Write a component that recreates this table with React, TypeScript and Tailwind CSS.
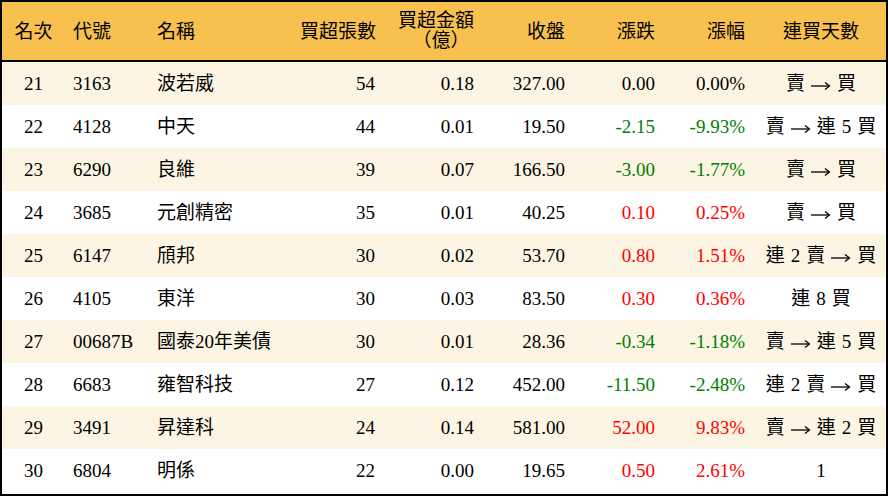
import React from "react";

type Row = {
  rank: string;
  code: string;
  name: string;
  vol: string;
  amt: string;
  close: string;
  chg: string;
  pct: string;
  days: string;
};

const rows: Row[] = [
  { rank: "21", code: "3163", name: "波若威", vol: "54", amt: "0.18", close: "327.00", chg: "0.00", pct: "0.00%", days: "賣 → 買" },
  { rank: "22", code: "4128", name: "中天", vol: "44", amt: "0.01", close: "19.50", chg: "-2.15", pct: "-9.93%", days: "賣 → 連 5 買" },
  { rank: "23", code: "6290", name: "良維", vol: "39", amt: "0.07", close: "166.50", chg: "-3.00", pct: "-1.77%", days: "賣 → 買" },
  { rank: "24", code: "3685", name: "元創精密", vol: "35", amt: "0.01", close: "40.25", chg: "0.10", pct: "0.25%", days: "賣 → 買" },
  { rank: "25", code: "6147", name: "頎邦", vol: "30", amt: "0.02", close: "53.70", chg: "0.80", pct: "1.51%", days: "連 2 賣 → 買" },
  { rank: "26", code: "4105", name: "東洋", vol: "30", amt: "0.03", close: "83.50", chg: "0.30", pct: "0.36%", days: "連 8 買" },
  { rank: "27", code: "00687B", name: "國泰20年美債", vol: "30", amt: "0.01", close: "28.36", chg: "-0.34", pct: "-1.18%", days: "賣 → 連 5 買" },
  { rank: "28", code: "6683", name: "雍智科技", vol: "27", amt: "0.12", close: "452.00", chg: "-11.50", pct: "-2.48%", days: "連 2 賣 → 買" },
  { rank: "29", code: "3491", name: "昇達科", vol: "24", amt: "0.14", close: "581.00", chg: "52.00", pct: "9.83%", days: "賣 → 連 2 買" },
  { rank: "30", code: "6804", name: "明係", vol: "22", amt: "0.00", close: "19.65", chg: "0.50", pct: "2.61%", days: "1" },
];

const cols = "grid grid-cols-[63px_84px_151px_83px_99px_91px_90px_93px_130px]";

function colorOf(v: string) {
  if (v.startsWith("-")) return "text-[#008000]";
  if (/^0\.00%?$/.test(v)) return "text-black";
  return "text-[#ff0000]";
}

function Days({ text }: { text: string }) {
  const parts = text.split(" ");
  return (
    <div className="flex items-center justify-center gap-[6px] whitespace-nowrap">
      {parts.map((p, i) =>
        p === "→" ? (
          <span key={i} className="inline-block w-[20px] text-center">
            <svg width="20" height="10" viewBox="0 0 20 10" className="inline-block align-middle">
              <path d="M0 5H18" stroke="black" strokeWidth="1.3" />
              <path d="M14 1.5L18.5 5L14 8.5" stroke="black" strokeWidth="1.3" fill="none" />
            </svg>
          </span>
        ) : (
          <span key={i}>{p}</span>
        )
      )}
    </div>
  );
}

export default function App() {
  return (
    <div
      className="w-[888px] h-[496px] bg-white border-2 border-black text-black text-[19px] leading-none"
      style={{ fontFamily: '"Liberation Serif", "Noto Sans CJK TC", serif' }}
    >
      <div className={`${cols} h-[60px] bg-[#F8C04F] border-b-2 border-black items-center whitespace-nowrap`}>
        <div className="text-center">名次</div>
        <div className="pl-2">代號</div>
        <div className="pl-2">名稱</div>
        <div className="text-right pr-2">買超張數</div>
        <div className="text-right pr-2">
          <div className="inline-block text-center leading-[20px]">
            <div>買超金額</div>
            <div className="pl-[10px]">（億）</div>
          </div>
        </div>
        <div className="text-right pr-2">收盤</div>
        <div className="text-right pr-2">漲跌</div>
        <div className="text-right pr-[11px]">漲幅</div>
        <div className="text-center">連買天數</div>
      </div>
      {rows.map((r, i) => (
        <div
          key={r.rank}
          className={`${cols} h-[43px] items-center whitespace-nowrap ${i % 2 === 0 ? "bg-[#FDF5E3]" : "bg-white"}`}
        >
          <div className="text-center">{r.rank}</div>
          <div className="pl-2">{r.code}</div>
          <div className="pl-2">{r.name}</div>
          <div className="text-right pr-2">{r.vol}</div>
          <div className="text-right pr-2">{r.amt}</div>
          <div className="text-right pr-2">{r.close}</div>
          <div className={`text-right pr-2 ${colorOf(r.chg)}`}>{r.chg}</div>
          <div className={`text-right pr-[11px] ${colorOf(r.pct)}`}>{r.pct}</div>
          <Days text={r.days} />
        </div>
      ))}
    </div>
  );
}
